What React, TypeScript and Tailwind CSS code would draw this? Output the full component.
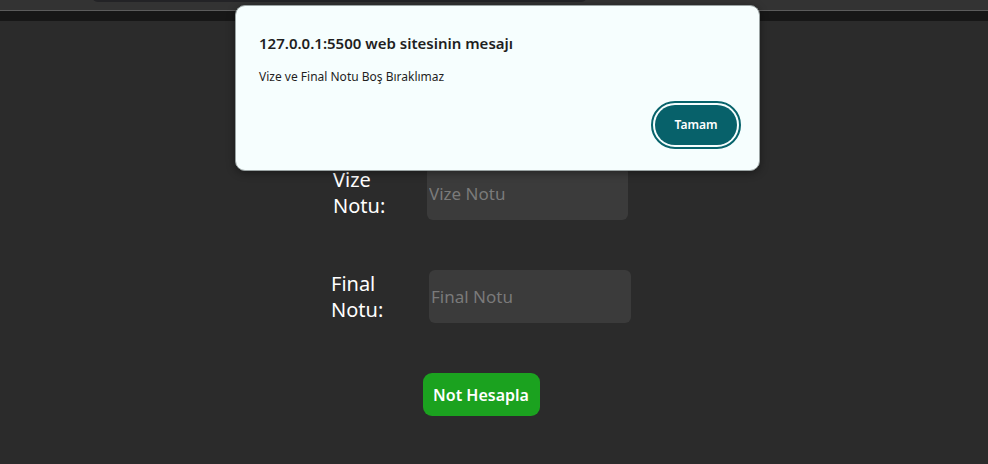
const App = () => {
  return (
    <div className="relative w-[988px] h-[464px] overflow-hidden bg-[#2b2b2b] font-['Noto_Sans','Open_Sans',sans-serif]">
      {/* browser chrome strip */}
      <div className="relative h-[10px] bg-[#333333]">
        <div className="absolute left-[92px] top-[-6px] w-[495px] h-[8px] rounded-b-[6px] bg-[#232326]" />
      </div>
      <div className="h-px bg-[#5c5c5c]" />
      <div className="h-[10px] bg-[#171717]" />

      {/* form */}
      <div className="flex flex-col items-center pt-[145px] pr-[26px]">
        <div className="flex flex-col gap-[50px]">
          <div className="flex items-center">
            <label className="w-[96px] pl-[2px] text-white text-[20px] leading-[26px]">
              Vize
              <br />
              Notu:
            </label>
            <input
              placeholder="Vize Notu"
              className="w-[201px] h-[54px] rounded-[6px] bg-[#3b3b3b] px-[2px] text-[17px] text-white placeholder:text-[#7a7a7a] outline-none"
            />
          </div>
          <div className="flex items-center">
            <label className="w-[98px] text-white text-[20px] leading-[26px]">
              Final
              <br />
              Notu:
            </label>
            <input
              placeholder="Final Notu"
              className="w-[202px] h-[53px] rounded-[6px] bg-[#3b3b3b] px-[2px] text-[17px] text-white placeholder:text-[#7a7a7a] outline-none"
            />
          </div>
        </div>
        <button className="mt-[50px] w-[117px] h-[43px] rounded-[9px] bg-[#1ba21f] text-white text-[16px] font-semibold">
          Not Hesapla
        </button>
      </div>

      {/* alert dialog */}
      <div className="absolute left-[235px] top-[5px] w-[525px] h-[166px] rounded-[10px] border border-[#9aa3a3] bg-[#f6fefe] shadow-[0_2px_8px_rgba(0,0,0,0.4)]">
        <div className="pl-[23px] pt-[27px]">
          <div className="text-[15px] font-semibold text-[#1f1f1f] leading-[20px]">
            127.0.0.1:5500 web sitesinin mesajı
          </div>
          <div className="mt-[16px] text-[12px] text-[#1f1f1f] leading-[16px]">
            Vize ve Final Notu Boş Bıraklımaz
          </div>
        </div>
        <div className="absolute right-[18px] top-[95px] rounded-full border-2 border-[#07636b] p-[2px]">
          <button className="w-[82px] h-[40px] rounded-full bg-[#07616a] text-white text-[12px] font-semibold">
            Tamam
          </button>
        </div>
      </div>
    </div>
  );
};

export default App;
